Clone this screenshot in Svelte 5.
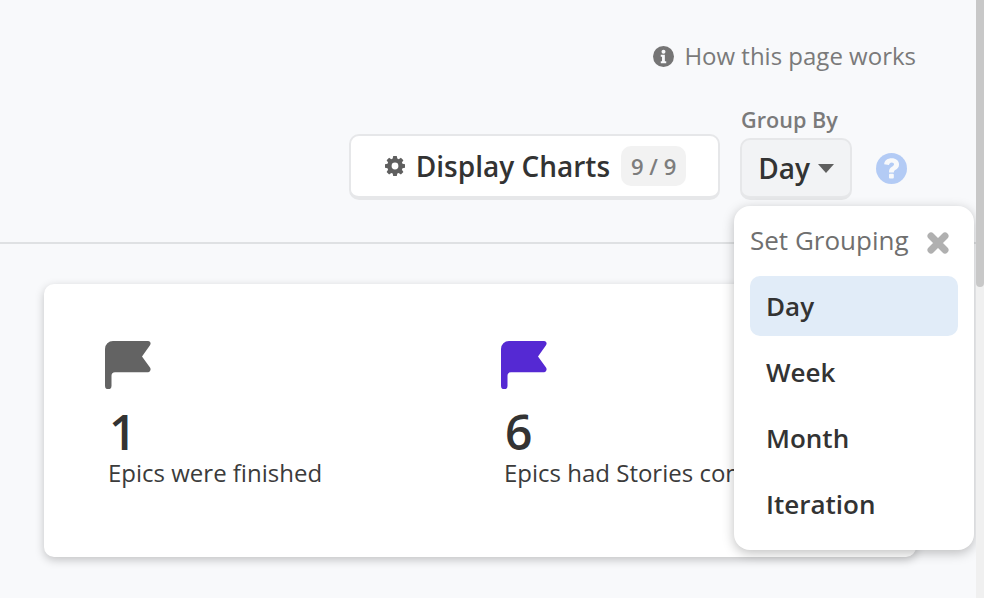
<script>
  const items = ['Day', 'Week', 'Month', 'Iteration'];
</script>

<div class="page">
  <header class="head">
    <a class="how">
      <svg class="info" viewBox="0 0 20 20" aria-hidden="true"><circle cx="10" cy="10" r="10" fill="#757575"/><circle cx="10" cy="5.4" r="1.9" fill="#f8f9fb"/><path d="M7.4 8.3h3.9v6.2h1.3v1.9H7.4v-1.9h1.2v-4.3H7.4z" fill="#f8f9fb"/></svg>
      <span>How this page works</span>
    </a>
    <div class="controls">
      <button class="display">
        <svg class="gear" viewBox="0 0 20 20" aria-hidden="true"><path fill-rule="evenodd" fill="#5f5f5f" d="M8.2 0h3.6l.5 2.6 1.4.6 2.2-1.5 2.5 2.500-1.500 2.200.6 1.400 2.500.4v3.600l-2.500.5-.6 1.400 1.500 2.200-2.500 2.500-2.200-1.500-1.400.6-.5 2.500H8.200l-.5-2.500-1.400-.6-2.200 1.500-2.500-2.500 1.500-2.200-.6-1.400L0 11.800V8.200l2.500-.4.6-1.400-1.500-2.200 2.500-2.500 2.200 1.500 1.400-.6zM10 6.600a3.400 3.400 0 1 0 0 6.800 3.400 3.400 0 0 0 0-6.800z"/></svg>
        <span class="dlabel">Display Charts</span>
        <span class="count">9 / 9</span>
      </button>
      <div class="group">
        <div class="glabel">Group By</div>
        <button class="select">Day<i class="caret"></i></button>
      </div>
      <svg class="help" viewBox="0 0 32 32" aria-hidden="true"><circle cx="16" cy="16" r="16" fill="#b3cbf5"/><path d="M8.400 11.600C8.900 7.600 12 5.500 16.200 5.500c4.300 0 7.600 2.600 7.600 6.300 0 3-1.700 4.300-3.500 5.500-1.400.9-1.900 1.500-1.900 2.900h-5c-.1-3 .9-4.500 3-5.900 1.300-.9 2.200-1.500 2.200-2.600 0-1.100-1-1.900-2.400-1.900-1.500 0-2.500.9-2.800 2.600z" fill="#f8f9fb"/><rect x="13.400" y="21.400" width="5" height="4.800" rx="1" fill="#f8f9fb"/></svg>
    </div>
  </header>

  <section class="card">
    <div class="stat first">
      <svg class="flag" viewBox="0 0 46 48" aria-hidden="true"><path fill="#636363" d="M0 8a8 8 0 0 1 8-8h35c2.200 0 3.400 2.500 2 4.200L37 15.500l8 11c1.400 1.900.2 4.800-2 4.800H10a3.500 3.500 0 0 0-3.500 3.500V45a3.250 3.250 0 0 1-6.500 0z"/></svg>
      <div class="num">1</div>
      <div class="desc">Epics were finished</div>
    </div>
    <div class="stat">
      <svg class="flag" viewBox="0 0 46 48" aria-hidden="true"><path fill="#5529d3" d="M0 8a8 8 0 0 1 8-8h35c2.200 0 3.400 2.500 2 4.200L37 15.500l8 11c1.400 1.900.2 4.800-2 4.800H10a3.500 3.500 0 0 0-3.500 3.500V45a3.250 3.250 0 0 1-6.500 0z"/></svg>
      <div class="num">6</div>
      <div class="desc">Epics had Stories completed</div>
    </div>
  </section>

  <div class="menu">
    <div class="mhead">
      <span>Set Grouping</span>
      <svg class="close" viewBox="0 0 22 22" aria-hidden="true"><path d="M4 4l14 14M18 4L4 18" stroke="#b0b0b0" stroke-width="7" stroke-linecap="round" fill="none"/></svg>
    </div>
    {#each items as item, i}
      <div class="item" class:active={i === 0}>{item}</div>
    {/each}
  </div>

  <div class="scrollbar"><div class="thumb"></div></div>
</div>

<style>
  :global(body) {
    margin: 0;
    overflow: hidden;
    background: #f8f9fb;
    font-family: "Open Sans", "Noto Sans", sans-serif;
  }
  .page {
    position: relative;
    width: 984px;
    height: 598px;
    overflow: hidden;
    box-sizing: border-box;
    background: #f8f9fb;
    color: #333;
  }
  .head {
    box-sizing: border-box;
    height: 244px;
    width: 976px;
    padding: 41px 60px 0 0;
    border-bottom: 2px solid #dfe1e3;
    display: flex;
    flex-direction: column;
    align-items: flex-end;
  }
  .how {
    display: flex;
    align-items: center;
    gap: 10px;
    color: #7a7a7a;
    font-size: 24px;
    line-height: 30px;
  }
  .info { width: 21px; height: 21px; }
  .controls {
    display: flex;
    align-items: flex-end;
    margin-top: 35px;
    margin-right: 1px;
  }
  .display {
    box-sizing: border-box;
    width: 371px;
    height: 66px;
    margin-right: 20px;
    padding: 0 0 0 2px;
    display: flex;
    align-items: center;
    justify-content: center;
    gap: 11px;
    background: #fff;
    border: 2px solid #e6e7e9;
    border-bottom-width: 4px;
    border-radius: 10px;
    font: inherit;
    color: #333;
  }
  .gear { width: 20px; height: 20px; }
  .dlabel { font-size: 28px; font-weight: 600; }
  .count {
    background: #f2f2f2;
    color: #7d7d7d;
    border-radius: 10px;
    font-size: 22px;
    font-weight: 600;
    padding: 4px 10px;
    line-height: 32px;
  }
  .group { display: flex; flex-direction: column; align-items: flex-start; }
  .glabel {
    color: #7a7a7a;
    font-size: 21.6px;
    font-weight: 600;
    line-height: 28px;
    margin-bottom: 4px;
    padding-left: 1px;
  }
  .select {
    box-sizing: border-box;
    width: 112px;
    height: 62px;
    padding: 0;
    display: flex;
    align-items: center;
    justify-content: center;
    gap: 8px;
    background: #f2f3f5;
    border: 2px solid #e6e7e9;
    border-bottom-width: 4px;
    border-radius: 10px;
    font: inherit;
    font-size: 28px;
    font-weight: 600;
    color: #333;
  }
  .caret {
    width: 0;
    height: 0;
    border-left: 8px solid transparent;
    border-right: 8px solid transparent;
    border-top: 9px solid #5f5f5f;
  }
  .help { width: 31px; height: 31px; margin: 0 8px 16px 24px; }
  .card {
    box-sizing: border-box;
    width: 872px;
    height: 273px;
    margin: 40px 0 0 44px;
    padding: 57px 0 0 61px;
    display: flex;
    background: #fff;
    border-radius: 10px;
    box-shadow: 0 3px 10px rgba(0,0,0,.22);
  }
  .stat { white-space: nowrap; width: 396px; }
  .flag { display: block; width: 46px; height: 48px; }
  .num {
    font-size: 48px;
    font-weight: 600;
    line-height: 54px;
    margin: 16px 0 0 4px;
    color: #333;
  }
  .desc {
    font-size: 24px;
    line-height: 28px;
    margin: 0 0 0 3px;
    color: #3b3b3b;
  }
  .menu {
    position: absolute;
    left: 734px;
    top: 206px;
    box-sizing: border-box;
    width: 240px;
    height: 344px;
    padding: 16px;
    background: #fff;
    border-radius: 16px;
    box-shadow: 0 3px 12px rgba(0,0,0,.25);
  }
  .mhead {
    display: flex;
    align-items: center;
    justify-content: space-between;
    height: 36px;
    margin-bottom: 18px;
    padding-right: 9px;
    color: #6f6f6f;
    font-size: 26px;
  }
  .close { width: 22px; height: 22px; margin-top: 6px; }
  .item {
    height: 60px;
    margin-bottom: 6px;
    padding-left: 16px;
    display: flex;
    align-items: center;
    border-radius: 10px;
    font-size: 26px;
    font-weight: 600;
    color: #333;
  }
  .item.active { background: #e1ecf8; }
  .scrollbar {
    position: absolute;
    top: 0;
    right: 0;
    bottom: 0;
    width: 8px;
    background: #f0f0f0;
  }
  .thumb { height: 287px; background: #c8c8c8; border-radius: 0 0 4px 4px; }
</style>
